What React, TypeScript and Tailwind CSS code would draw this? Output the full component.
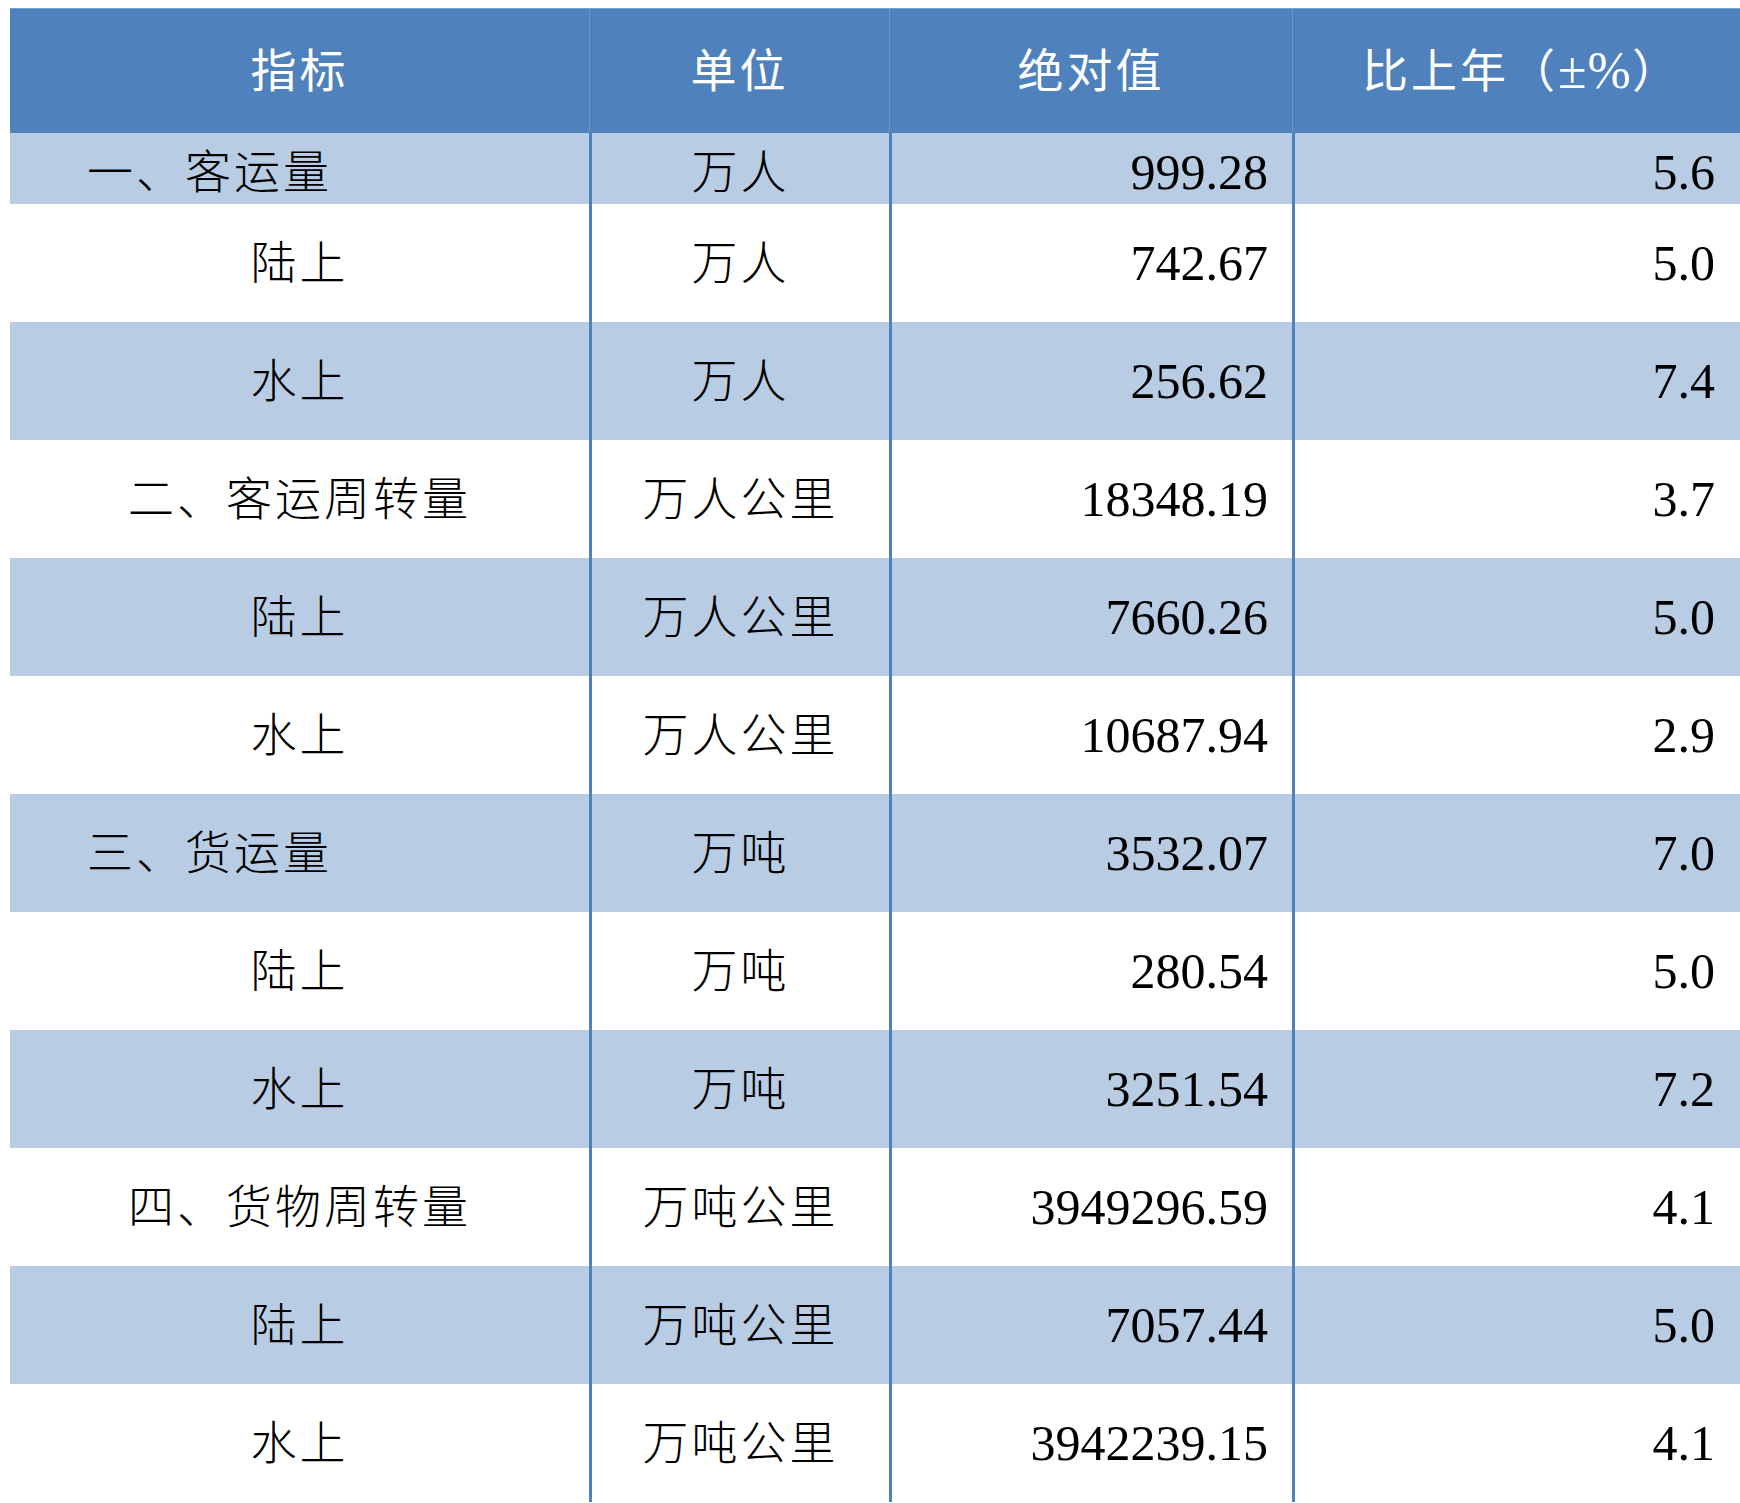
import React from "react";

type Row = {
  name: string;
  unit: string;
  value: string;
  change: string;
  left?: boolean;
};

const rows: Row[] = [
  { name: "一、客运量", unit: "万人", value: "999.28", change: "5.6", left: true },
  { name: "陆上", unit: "万人", value: "742.67", change: "5.0" },
  { name: "水上", unit: "万人", value: "256.62", change: "7.4" },
  { name: "二、客运周转量", unit: "万人公里", value: "18348.19", change: "3.7" },
  { name: "陆上", unit: "万人公里", value: "7660.26", change: "5.0" },
  { name: "水上", unit: "万人公里", value: "10687.94", change: "2.9" },
  { name: "三、货运量", unit: "万吨", value: "3532.07", change: "7.0", left: true },
  { name: "陆上", unit: "万吨", value: "280.54", change: "5.0" },
  { name: "水上", unit: "万吨", value: "3251.54", change: "7.2" },
  { name: "四、货物周转量", unit: "万吨公里", value: "3949296.59", change: "4.1" },
  { name: "陆上", unit: "万吨公里", value: "7057.44", change: "5.0" },
  { name: "水上", unit: "万吨公里", value: "3942239.15", change: "4.1" },
];

const font = "font-['Liberation_Serif','Noto_Sans_CJK_SC',serif]";

export default function App() {
  return (
    <div className={`w-[1740px] h-[1503px] bg-white pt-[8px] pl-[10px] overflow-hidden ${font}`}>
      {/* Header */}
      <div className="grid grid-cols-[579px_300px_403px_448px] h-[125px] bg-[#4f81bd] border-t border-[#7aa0d0] text-white text-[46px] tracking-[3px]">
        <div className="flex items-center justify-center">指标</div>
        <div className="flex items-center justify-center border-l border-[#6b95c9]">单位</div>
        <div className="flex items-center justify-center border-l border-[#6b95c9]">绝对值</div>
        <div className="flex items-center justify-center border-l border-[#6b95c9] pl-[10px]">
          比上年（<span className="text-[52px] tracking-[1px]">±%</span>）
        </div>
      </div>

      {/* Body */}
      {rows.map((r, i) => {
        const pad = i === 0 ? "pt-[2px]" : "";
        return (
          <div
            key={i}
            className={`grid grid-cols-[579px_300px_403px_448px] text-black ${
              i === 0 ? "h-[71px]" : "h-[118px]"
            } ${i % 2 === 0 ? "bg-[#b8cce4]" : "bg-white"}`}
          >
            <div
              className={`flex items-center text-[46px] tracking-[3px] font-light ${pad} ${
                r.left ? "justify-start pl-[77px]" : "justify-center"
              }`}
            >
              {r.name}
            </div>
            <div className={`flex items-center justify-center border-l-[3px] border-[#4f81bd] text-[46px] tracking-[3px] font-light ${pad}`}>
              {r.unit}
            </div>
            <div className={`flex items-center justify-end border-l-[3px] border-[#4f81bd] pr-[24px] text-[50px] ${pad}`}>
              {r.value}
            </div>
            <div className={`flex items-center justify-end border-l-[3px] border-[#4f81bd] pr-[25px] text-[50px] ${pad}`}>
              {r.change}
            </div>
          </div>
        );
      })}
    </div>
  );
}
